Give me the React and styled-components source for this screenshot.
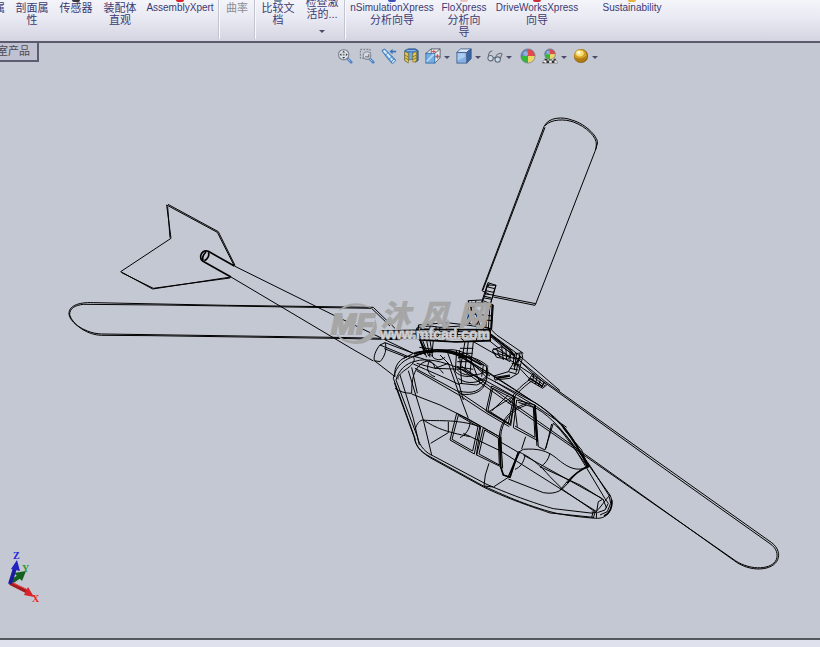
import React, { useState } from 'react'
import styled, { createGlobalStyle } from 'styled-components'

const GlobalStyle = createGlobalStyle`
  * {
    box-sizing: border-box;
  }
  body {
    margin: 0;
    background: #c4c8d3;
    font-family: 'Liberation Sans', 'Noto Sans CJK SC', sans-serif;
  }
  button {
    font-family: inherit;
    border: 0;
    padding: 0;
    background: none;
  }
`

const Page = styled.div`
  display: flex;
  flex-direction: column;
  min-height: 100vh;
`

const Ribbon = styled.header`
  display: flex;
  height: 43px;
  overflow: hidden;
  background: linear-gradient(#f4f5fa, #e8e9f2 45%, #d3d4e0);
  border-bottom: 2px solid #5c5b6e;
`

const RibbonButton = styled.button`
  display: flex;
  flex-direction: column;
  align-items: ${p => (p.$clipped ? 'flex-end' : 'center')};
  flex: none;
  width: ${p => p.$width}px;
  padding-right: ${p => (p.$clipped ? 5 : 0)}px;
  overflow: hidden;
  color: ${p => (p.disabled ? '#8d8d93' : '#3d3a70')};
`

const IconFoot = styled.span`
  flex: none;
  width: ${p => (p.$color ? 8 : 0)}px;
  height: 2px;
  margin-top: ${p => (p.$raised ? -6 : 0)}px;
  border-radius: 0 0 4px 4px;
  background: ${p => p.$color || 'none'};
`

const Label = styled.span`
  font-size: ${p => (p.$latin ? 10 : 11)}px;
  line-height: 12px;
  white-space: nowrap;
`

const Separator = styled.span`
  flex: none;
  width: 2px;
  height: 39px;
  background: linear-gradient(90deg, #c3c4d0 50%, #fafafd 50%);
`

const Arrow = styled.span`
  flex: none;
  border: 3px solid transparent;
  border-top-color: #4c4c68;
  border-bottom: 0;
  margin: ${p => (p.$below ? '10px 0 0' : '2px 0 0 3px')};
`

const Viewport = styled.main`
  position: relative;
  display: flex;
  flex: 1;
  align-items: flex-start;
  background: #c4c8d3;
`

const ConfigTab = styled.button`
  display: flex;
  justify-content: flex-end;
  width: 39px;
  height: 19px;
  padding-right: 7px;
  overflow: hidden;
  font-size: 11px;
  line-height: 16px;
  white-space: nowrap;
  color: #4b4b55;
  background: #c0c1d1;
  border: solid #5c5d70;
  border-width: 0 2px 2px 0;
`

const ViewTools = styled.div`
  display: flex;
  position: relative;
  z-index: 1;
  margin-left: 295px;
  padding-top: 3px;
`

const ViewButton = styled.button`
  display: flex;
  align-items: center;
  flex: none;
  width: ${p => (p.$menu ? 31 : 22)}px;
  height: 20px;
  margin-left: ${p => (p.$gap ? 2 : 0)}px;
  padding-left: 3px;
`

const Drawing = styled.svg`
  position: absolute;
  inset: 0;
  width: 100%;
  height: 100%;
`

const Wire = styled.g`
  fill: none;
  stroke: #000;
  stroke-width: ${p => p.$weight || 1};
  stroke-linejoin: round;
`

const StatusBar = styled.footer`
  height: 9px;
  background: #dfe2ec;
  border-top: 2px solid #55575f;
`

const ribbonItems = [
  { lines: ['属'], width: 10, clipped: true },
  { lines: ['剖面属', '性'], width: 44 },
  { lines: ['传感器'], width: 44, foot: '#33343c' },
  { lines: ['装配体', '直观'], width: 44 },
  { lines: ['AssemblyXpert'], width: 76, foot: '#d8242c' },
  { sep: true },
  { lines: ['曲率'], width: 34, disabled: true },
  { sep: true },
  { lines: ['比较文', '档'], width: 44, foot: '#6d8ba0' },
  { lines: ['检查激', '活的...'], width: 44, raised: true, menu: true },
  { sep: true },
  { lines: ['nSimulationXpress', '分析向导'], width: 92, foot: '#3b50b8' },
  { lines: ['FloXpress', '分析向', '导'], width: 52, foot: '#eac5c3' },
  { lines: ['DriveWorksXpress', '向导'], width: 94, foot: '#c8303c' },
  { lines: ['Sustainability'], width: 96, foot: '#e5b53a' },
]

const Lens = () => (
  <>
    <path d="M11 11l5 5" stroke="#4f83c4" strokeWidth="3" strokeLinecap="round" />
    <path d="M11 11l4 4" stroke="#a9cdf0" strokeWidth="1" />
  </>
)

const BeachBall = ({ cx, cy, r }) => (
  <g>
    <path d={`M${cx} ${cy}V${cy - r}A${r} ${r} 0 0 0 ${cx - r} ${cy}z`} fill="#5c86c4" />
    <path d={`M${cx} ${cy}V${cy - r}A${r} ${r} 0 0 1 ${cx + r} ${cy}z`} fill="#e04a4c" />
    <path d={`M${cx} ${cy}H${cx - r}A${r} ${r} 0 0 0 ${cx} ${cy + r}z`} fill="#35b83a" />
    <path d={`M${cx} ${cy}H${cx + r}A${r} ${r} 0 0 1 ${cx} ${cy + r}z`} fill="#ecd766" />
    <circle cx={cx} cy={cy} r={r} fill="none" stroke="#66708a" strokeWidth=".7" />
    <circle cx={cx - r / 3} cy={cy - r / 3} r={r / 3} fill="#fff" opacity=".35" />
  </g>
)

const viewTools = [
  {
    name: '整屏显示全图',
    icon: (
      <>
        <Lens />
        <circle cx="7.5" cy="7.5" r="5.8" fill="#dfe5ec" stroke="#858b95" strokeWidth="1.4" />
        <path d="M7.5 3l1.6 2H5.9zM7.5 12l1.6-2H5.9zM3 7.5l2-1.6v3.2zM12 7.5l-2-1.6v3.2z" fill="#333" />
        <rect x="6.500" y="6.500" width="2" height="2" fill="#777" />
      </>
    ),
  },
  {
    name: '局部放大',
    icon: (
      <>
        <rect x="1.500" y="1.500" width="11" height="10" fill="none" stroke="#61666f" strokeDasharray="2 1.500" />
        <Lens />
        <circle cx="9" cy="8.500" r="4.300" fill="#d3d9e2" stroke="#858b96" strokeWidth="1.300" />
        <path d="M7 10h4V7" stroke="#555" fill="none" />
      </>
    ),
  },
  {
    name: '上一视图',
    icon: (
      <>
        <path d="M1 3l3-2 5 5 7 7-4 4-6-7z" fill="#6ea6dd" stroke="#3f76b2" />
        <path d="M3 3l5 5 5 6" stroke="#dff0ff" strokeWidth="2" fill="none" />
        <path d="M5 8l3-3M9 13l4-4" stroke="#3f76b2" fill="none" />
        <ellipse cx="14" cy="15" rx="1.5" ry="2.8" transform="rotate(45 14 15)" fill="#c8e5fa" stroke="#4179b5" />
        <path d="M17 4h-5" stroke="#3676bd" strokeWidth="2" />
        <path d="M13 1v6L9.5 4z" fill="#3676bd" />
      </>
    ),
  },
  {
    name: '剖面视图',
    icon: (
      <>
        <path d="M2 3l4-2h8l3 2v11l-3 2-3-3H7l-2 3-3-2z" fill="#3f78bd" stroke="#285487" />
        <path d="M2 4l4 2v11l-4-3zM11 6l4-2v11l-4 1z" fill="#e8c94a" stroke="#8e7524" strokeWidth=".7" />
        <path d="M2 8l4 2M2 11l4 2M15 8l-4 2M15 11l-4 2" stroke="#8e7524" />
        <path d="M7 5h3v8H7z" fill="#78a9df" />
        <path d="M4 3h10" stroke="#a9cbee" />
      </>
    ),
  },
  {
    name: '视图定向',
    menu: true,
    icon: (
      <>
        <path d="M1 6l6-5h10v10l-6 6z" fill="#e8eaf0" stroke="#555b66" />
        <path d="M7 1v9h10M17 1l-6 5" stroke="#555b66" fill="none" />
        <rect x="1" y="6" width="10" height="11" fill="#73aee2" stroke="#3a6faa" />
        <path d="M2 15l8-8" stroke="#b5d8f5" strokeWidth="2" />
        <path d="M8 4h4M10 2v4M12 9h4M14 7v5" stroke="#d13d40" />
      </>
    ),
  },
  {
    name: '显示样式',
    menu: true,
    icon: (
      <>
        <path d="M1 5l4-4h12l-5 4z" fill="#d8e9fa" stroke="#49658e" />
        <path d="M12 5l5-4v11l-5 5z" fill="#3a66a8" stroke="#2f5287" />
        <rect x="1" y="5" width="11" height="12" fill="#86b1e4" stroke="#49658e" />
        <path d="M2 6h8v4l-8 4z" fill="#aacdf2" />
      </>
    ),
  },
  {
    name: '隐藏/显示项目',
    menu: true,
    icon: (
      <g fill="#c8dcec" stroke="#646b76" strokeWidth="1.2">
        <path d="M1.500 11C1 7 3 3 6 3M9.5 12c0-4 3-6 7-6" fill="none" />
        <circle cx="4" cy="11.500" r="3" />
        <circle cx="12" cy="13" r="3" />
        <path d="M7 11q1-1 2 1M15 12l2-6" fill="none" />
      </g>
    ),
  },
  { name: '编辑外观', icon: <BeachBall cx={9} cy={9} r={8} />, gap: true },
  {
    name: '应用布景',
    menu: true,
    icon: (
      <>
        <path d="M4 11h10l4 6H0z" fill="#f2f2f2" stroke="#666" strokeWidth=".6" />
        <path d="M3 12h3v2H3zM8 12h3v2H8zM13 12h2l1 2h-3zM5 14h3v3H5zM11 14h3v3h-3zM1 16h2v1H1z" fill="#333" />
        <BeachBall cx={9} cy={7} r={6} />
      </>
    ),
  },
  {
    name: '视图设置',
    menu: true,
    icon: (
      <>
        <circle cx="9" cy="9" r="8" fill="#8f6212" />
        <circle cx="8.500" cy="8.500" r="7" fill="#d8a326" />
        <path d="M2 10q7 4 13-1-1 6-6 6.500T2 10z" fill="#b07c16" />
        <ellipse cx="7.500" cy="6" rx="4.500" ry="3.5" fill="#f7df78" />
        <circle cx="6.500" cy="5" r="2" fill="#fff8d5" />
      </>
    ),
  },
]

const tailAndLeftBlade = [
  'M320 45L472 127L523 228',
  'M324 43L475 125L525 226',
  'M320 45L333 145M323 50L330 143',
  'M333 145L182 245L278 297L513 261',
  'M185 248L280 295L510 264',
  'M523 228L822 376L964 444L1060 490',
  'M513 261L882 480L940 513',
  'M100 338L300 342L500 346L940 352L1005 415',
  'M70 343L300 345L500 348L935 355L990 408',
  'M100 338C50 336 26 350 27 372C30 400 80 431 125 432',
  'M70 343C45 346 28 355 29 375C38 405 84 436 125 436',
  'M125 432L270 434L820 442L1020 446',
  'M125 436L270 437L820 445L1020 449',
]

const tailSocket = [
  'M523 228L445 184C432 180 422 188 422 200C422 210 428 214 433 216L513 261',
  'M445 187C449 195 444 207 433 212M438 186C428 196 426 205 430 212',
]

const topBlade = [
  'M222 80L36 572M225 82L39 570',
  'M222 80C235 50 280 50 305 60C350 72 388 115 382 132L375 154L197 612',
  'M225 77C245 56 285 57 310 66C350 80 380 112 379 132L378 148',
  'M70 586L197 611L195 616L70 591M36 572L60 584',
  'M54 548L78 556L74 566L50 560zM50 560L35 606M74 566L62 610M47 572L70 577M40 588L64 594M58 550L53 562',
]

const rightBlade = [
  'M-28 -20L75 64L420 310L755 548',
  'M-30 0L80 72L420 317L750 551',
  'M755 548C775 563 780 584 773 599C760 632 690 640 640 600',
  'M750 551C770 564 775 584 769 599C757 628 695 634 646 602',
  'M640 600L195 283L0 145L-180 15',
  'M646 602L198 290L0 153L-190 18',
]

const fuselage = [
  'M40 115C48 75 75 58 100 50C140 30 200 30 230 45L330 100L460 185C510 215 550 260 580 300L628 378L690 465',
  'M48 120C56 90 78 70 105 64C140 52 190 66 230 82L320 124L455 198C500 218 540 262 570 302L620 384L675 476',
  'M205 38C250 48 280 70 320 112L465 188C520 222 570 270 600 335L632 380L688 468',
  'M690 465C700 485 696 510 680 525C665 538 650 535 634 534C590 530 540 524 510 515C420 490 350 455 310 438L150 350C120 335 105 315 105 295L60 170L40 115',
  'M48 120L112 290C118 320 140 340 160 348L318 432C400 468 480 495 520 506L640 520',
  'M43 128L102 290C108 325 130 340 152 354L310 441C400 484 480 508 510 519L640 532',
  'M85 92L130 240L155 345M60 105L100 235L118 315M95 82L112 160',
  'M45 145C60 155 75 160 95 160C95 120 100 90 125 70C145 58 160 62 165 85L205 70L235 155L265 235',
  'M105 270C110 250 120 240 130 240C160 245 230 235 300 260M130 240C170 265 195 275 270 290',
  'M95 162L180 195L265 237L358 290M205 245V278L152 310M270 245C270 270 255 285 240 293',
  'M105 85L235 155L320 212L390 252M110 92L235 164L320 220L388 260',
  'M235 153C280 163 300 155 320 120V80M240 162C280 168 310 155 318 125M235 115C260 135 300 130 320 108',
  'M150 60C135 85 145 105 165 110M165 85L250 88L310 124M110 70L165 85M205 70L180 45',
  'M230 220L300 258L283 342L210 300zM235 226L294 260L278 333L216 298zM302 260L289 346',
  'M310 263L358 290L362 380L290 345zM314 270L355 294L358 375L297 342z',
  'M335 138L405 172L390 255L318 213zM338 145L400 176L385 250L324 211zM385 165L335 213M390 175L330 213',
  'M410 180L465 195L470 300L400 263zM415 187L460 202L465 292L405 258M400 165L412 260M392 258L405 170',
  'M440 190C390 205 360 245 358 290L362 380L370 405L390 412L415 337M440 195C395 210 364 245 362 290L368 385',
  'M465 195L475 320L495 330L520 250M462 200L471 318M498 325L515 252',
  'M415 337L430 328C470 325 500 330 530 355C560 380 590 400 628 378M628 378C600 385 585 405 570 420C550 450 530 465 490 458L385 417',
  'M415 335C450 350 480 375 510 410L550 450L645 515M360 305L415 337M430 345L665 475M415 337L385 410L420 335',
  'M250 280L360 332L650 515M480 380L600 435L672 480',
  'M437 290L425 327M435 348C430 370 420 382 405 388M510 340C505 360 495 372 480 382M590 400C565 415 555 435 540 450',
  'M327 370L316 405L312 438M342 440L385 412M312 438L340 441',
  'M520 250C560 280 590 330 628 378M530 258C560 290 600 350 624 382M550 265L605 330L625 382',
  'M690 465C675 480 665 500 645 518L640 534M668 478L655 485L650 515M675 476L685 490L675 510L652 518M635 516L650 518L649 534M688 470L692 490L682 515L660 525M670 480L680 505M640 515L635 532',
  'M240 45L455 182M345 125L470 200L560 262M260 62L330 108',
]

const fuselageAccents = [
  'M362 290L362 380L370 405L390 412L415 337M465 195L472 305',
  'M548 258C580 300 600 330 622 378M100 50C140 30 200 28 250 50M628 378C600 390 585 400 562 430',
  'M695 480C698 500 690 520 672 528',
]

// rotor head, swash plate and the boom clamp
const rotorHead = [
  'M150 225C137 240 130 260 133 272L150 275C165 260 172 235 165 218zM165 218L250 250L220 266M150 225L240 262M133 272L195 320M163 236L230 262',
  'M195 320C190 290 210 262 240 258C265 262 250 285 225 300C210 312 200 322 205 328',
  'M250 250C265 240 300 250 350 240C380 235 410 250 430 265L470 290C480 310 470 335 440 345L388 340',
  'M250 282C300 305 340 320 390 345M255 260C300 270 320 285 340 310M300 250C310 270 330 275 345 262',
  'M265 165L350 158L410 165L480 175L482 212L370 215L270 208z',
  'M262 172L300 168L330 172L395 168M270 178H480M265 185H475M268 200H480M275 192L480 195',
  'M300 166V212M318 170V210M350 160L345 212M392 166L380 196L402 212M330 172L322 212M440 172V212M460 175V212',
  'M262 172C255 185 257 205 270 210L290 262M270 210L285 255M278 212L296 258M290 212L300 262M300 212L308 260M310 212L306 250M268 232L310 238M272 245L308 248',
  'M155 182L265 180M155 190L265 192M155 182V192M200 180V208M212 180V208M225 180V208M150 204H265',
  'M415 92L455 90L490 105L485 178L458 168L415 160zM420 100L460 98L484 110M415 92L440 165M425 95L450 168M460 98L440 168M470 100L468 170M480 105L475 176M410 130L488 138M412 145L487 152M405 165L430 100M438 92L418 160',
  'M472 45L498 46L490 75L466 72zM466 72L456 98M490 75L480 104M462 84L486 88',
  'M405 215L390 300M415 215L405 300M430 215L420 310M390 235H430M386 250H428M384 262H425M382 275H422M380 290L430 298M380 240L376 305C390 320 420 325 440 312',
  'M385 265C400 250 450 265 475 290M382 300C400 318 430 322 470 305M388 240L395 340M420 262L450 340M470 290L470 312M440 270L460 285L455 320M350 240L388 345L400 390',
  'M480 190L560 250L690 362M482 200L555 260M478 212L540 262M430 215L500 255M480 175L500 195L580 250',
  'M487 240L515 230L545 250L535 268L500 262zM500 236L510 262M515 230L520 270M528 238L530 270M487 245L540 275M490 235L545 262M540 245V275M502 250L560 268',
  'M553 252L575 248L578 262L565 310L540 325L495 330L492 318L535 305L550 280zM560 250L553 300M570 250L558 308M548 262L574 268M545 280L570 285M540 295L565 300M535 305L560 312M495 322L540 315',
  'M610 310L650 345L638 355L595 330zM600 325L640 350M606 318L645 348M612 312L608 335M622 320L616 342M632 328L625 348M642 337L635 353M565 268L610 312M560 285L600 328',
  'M600 328C570 350 550 370 535 400M605 333C575 355 555 375 540 400',
]

const rotorAccents = [
  'M155 186H215M270 210L380 216L480 212M252 252C300 235 350 235 400 255L455 285',
  'M480 180V212M552 290L572 258M500 325L540 318M270 178L480 180M262 175L268 205L285 240',
  'M487 105L483 178M482 195L540 240L555 258M600 325L638 350',
]

const Sketch = ({ x, y, paths, weight }) => (
  <Wire $weight={weight || 3} transform={`translate(${x} ${y}) scale(.3333)`}>
    {paths.map((d, index) => (
      <path key={index} d={d} />
    ))}
  </Wire>
)

const Watermark = () => (
  <g fill="#a6a6a6" fontWeight="bold" fontFamily="'Liberation Sans', 'Noto Sans CJK SC', sans-serif">
    <path d="M339 311C344 302 362 300 373 309C362 304 350 304 339 311z" />
    <path d="M335 331C342 344 366 346 374 325L375 319C381 331 372 344 357 344C345 344 338 339 335 331z" />
    <g fontSize="30" fontStyle="italic" stroke="#a6a6a6" strokeWidth="2">
      <text x="331" y="334">M</text>
      <text x="356" y="334">F</text>
    </g>
    <g fontSize="29" fontStyle="italic" stroke="#a6a6a6">
      <text x="381" y="326">沐</text>
      <text x="420" y="326">风</text>
      <text x="458" y="326">网</text>
    </g>
    <text x="380" y="339" fontSize="14" fill="#cfd0d3" stroke="#a2a2a6" strokeWidth="1" paintOrder="stroke">
      www.mfcad.com
    </text>
  </g>
)

const Triad = () => (
  <g fontFamily="'Liberation Serif', serif" fontSize="10" fontWeight="bold">
    <path d="M10 583L20 576" stroke="#15601d" strokeWidth="4" />
    <path d="M26 571L22 581L14 573z" fill="#15601d" />
    <path d="M10 583L28 592" stroke="#a81b20" strokeWidth="4" />
    <path d="M11 582L28 590" stroke="#f04a4a" strokeWidth="1" />
    <path d="M34 597L24 595L28 587z" fill="#d8242a" />
    <path d="M10 584L15 568" stroke="#1b1ba0" strokeWidth="4" />
    <path d="M17 560L20 571L11 569z" fill="#2323c4" />
    <text x="13" y="559" fill="#2020e0">Z</text>
    <text x="22" y="572" fill="#2b9a38">Y</text>
    <text x="32" y="602" fill="#f01c1c">X</text>
  </g>
)

export default function App() {
  const [active, setActive] = useState(null)

  return (
    <Page>
      <GlobalStyle />
      <Ribbon>
        {ribbonItems.map((item, index) =>
          item.sep ? (
            <Separator key={index} />
          ) : (
            <RibbonButton key={index} $width={item.width} $clipped={item.clipped} disabled={item.disabled}>
              <IconFoot $color={item.foot} $raised={item.raised} />
              {item.lines.map(line => (
                <Label key={line} $latin={/^[A-Za-z]/.test(line)}>{line}</Label>
              ))}
              {item.menu && <Arrow $below />}
            </RibbonButton>
          )
        )}
      </Ribbon>
      <Viewport>
        <Drawing viewBox="0 43 820 595" role="img" aria-label="直升机">
          <Sketch x={60} y={190} paths={tailAndLeftBlade} />
          <Sketch x={60} y={190} paths={tailSocket} weight={5} />
          <Sketch x={470} y={100} paths={topBlade} />
          <Sketch x={520} y={360} paths={rightBlade} />
          <Sketch x={380} y={340} paths={fuselage} />
          <Sketch x={380} y={340} paths={fuselageAccents} weight={5} />
          <Sketch x={330} y={270} paths={rotorHead} />
          <Sketch x={330} y={270} paths={rotorAccents} weight={5} />
          <Watermark />
          <Triad />
        </Drawing>
        <ConfigTab>室产品</ConfigTab>
        <ViewTools>
          {viewTools.map(tool => (
            <ViewButton
              key={tool.name}
              aria-label={tool.name}
              aria-pressed={active === tool.name}
              $menu={tool.menu}
              $gap={tool.gap}
              onClick={() => setActive(tool.name)}
            >
              <svg width="16" height="16" viewBox="0 0 18 18" fill="none">{tool.icon}</svg>
              {tool.menu && <Arrow />}
            </ViewButton>
          ))}
        </ViewTools>
      </Viewport>
      <StatusBar />
    </Page>
  )
}
